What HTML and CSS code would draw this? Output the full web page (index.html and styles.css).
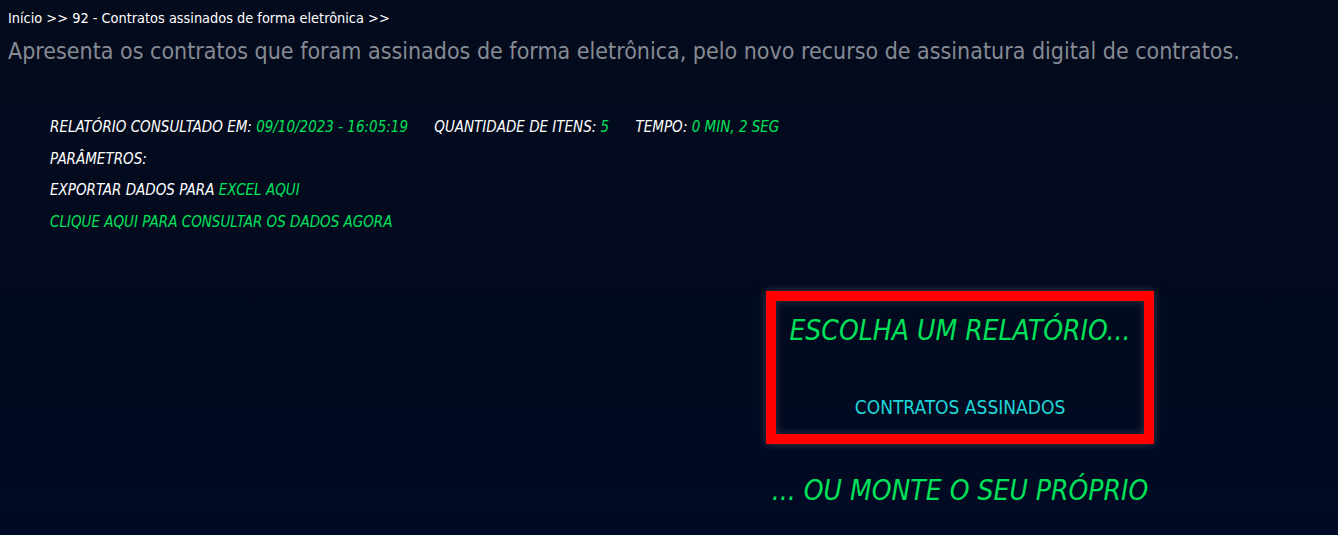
FILE: index.html
```html
<!DOCTYPE html>
<html lang="pt-BR">
<head>
<meta charset="utf-8">
<title>Contratos assinados de forma eletrônica</title>
<link rel="stylesheet" href="styles.css">
</head>
<body>
<div class="page">
  <nav class="breadcrumb">Início &gt;&gt; 92 - Contratos assinados de forma eletrônica &gt;&gt;</nav>
  <p class="description">Apresenta os contratos que foram assinados de forma eletrônica, pelo novo recurso de assinatura digital de contratos.</p>

  <section class="report-info">
    <div class="info-line">
      <span class="info-item">RELATÓRIO CONSULTADO EM: <span class="hl">09/10/2023 - 16:05:19</span></span>
      <span class="info-item">QUANTIDADE DE ITENS: <span class="hl">5</span></span>
      <span class="info-item">TEMPO: <span class="hl">0 MIN, 2 SEG</span></span>
    </div>
    <div class="info-line">PARÂMETROS:</div>
    <div class="info-line">EXPORTAR DADOS PARA <a class="hl" href="#">EXCEL AQUI</a></div>
    <div class="info-line"><a class="hl" href="#">CLIQUE AQUI PARA CONSULTAR OS DADOS AGORA</a></div>
  </section>

  <section class="chooser">
    <div class="chooser-col">
      <div class="chooser-box">
        <h2 class="chooser-title">ESCOLHA UM RELATÓRIO...</h2>
        <a class="chooser-link" href="#">CONTRATOS ASSINADOS</a>
      </div>
      <div class="chooser-own">... OU MONTE O SEU PRÓPRIO</div>
    </div>
  </section>
</div>
</body>
</html>
```

FILE: styles.css
```css
html, body {
  margin: 0;
  padding: 0;
  height: 100%;
}

body {
  background: linear-gradient(180deg, #040b1c 0%, #020a20 60%, #010a24 100%);
  font-family: "Liberation Sans Narrow", "DejaVu Sans Condensed", "Liberation Sans", sans-serif;
  color: #ffffff;
  overflow: hidden;
}

.page {
  padding: 8px 8px 0 8px;
}

.breadcrumb {
  font-size: 14.4px;
  line-height: 20px;
  color: #ffffff;
}

.description {
  margin: 8px 0 0 0;
  font-size: 23px;
  line-height: 30px;
  color: #868a93;
}

.report-info {
  margin-top: 46px;
  padding-left: 42px;
  font-style: italic;
  font-size: 15px;
}

.info-line {
  height: 31.5px;
  line-height: 31.5px;
  white-space: nowrap;
}

.info-item {
  margin-right: 22px;
}

.hl {
  color: #00e15a;
  text-decoration: none;
}

.chooser {
  display: grid;
  grid-template-columns: 758px 388px 1fr;
  margin-top: 53px;
}

.chooser-col {
  grid-column: 2;
  display: flex;
  flex-direction: column;
  align-items: center;
}

.chooser-box {
  box-sizing: border-box;
  width: 388px;
  height: 153px;
  border: 10px solid #ff0000;
  box-shadow: 0 0 8px rgba(160, 160, 160, 0.35), inset 0 0 8px rgba(160, 160, 160, 0.3);
  display: flex;
  flex-direction: column;
  align-items: center;
  text-align: center;
}

.chooser-title {
  margin: 12px 0 0 0;
  font-weight: normal;
  font-style: italic;
  font-size: 28px;
  line-height: 36px;
  color: #00e15a;
}

.chooser-link {
  margin-top: 46px;
  font-size: 19px;
  line-height: 24px;
  color: #1fd6d6;
  text-decoration: none;
}

.chooser-own {
  margin-top: 29px;
  font-style: italic;
  font-size: 28px;
  line-height: 36px;
  color: #00e15a;
}
```
